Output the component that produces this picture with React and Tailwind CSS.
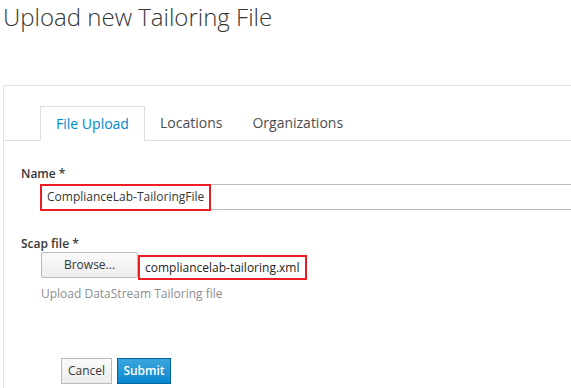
import React from "react";

export default function App() {
  return (
    <div
      className="w-[571px] h-[388px] overflow-hidden bg-white text-[#363636]"
      style={{ fontFamily: '"Open Sans", "Liberation Sans", sans-serif' }}
    >
      <h1 className="pl-[3px] pt-[2px] text-[24px] font-light leading-[30px] text-[#363636]">
        Upload new Tailoring File
      </h1>

      <div className="mt-[53px] ml-[3px] border-t border-l border-[#e2e2e2] h-[400px]">
        {/* tabs */}
        <div className="flex items-end pt-[19px] pl-[36px] border-b border-[#ddd]">
          <div className="-mb-px h-[35px] w-[105px] flex items-center justify-center border border-b-white border-[#ddd] text-[14px] text-[#0088ce]">
            File Upload
          </div>
          <div className="h-[35px] px-[15px] flex items-center text-[14px] text-[#4d4d4d]">
            Locations
          </div>
          <div className="h-[35px] px-[15px] flex items-center text-[14px] text-[#4d4d4d]">
            Organizations
          </div>
        </div>

        {/* name */}
        <div className="pt-[24px] pl-[17px] text-[12px] font-semibold text-[#363636] leading-[18px]">
          Name *
        </div>
        <div className="ml-[37px] mt-[1px] h-[26px] border-t border-b border-[#bbb] flex items-center">
          <span className="-ml-px h-[27px] px-[5px] border-2 border-[#ed1c24] flex items-center text-[12px] text-[#363636]">
            ComplianceLab-TailoringFile
          </span>
        </div>

        {/* scap file */}
        <div className="pt-[25px] pl-[17px] text-[12px] font-semibold text-[#363636] leading-[18px]">
          Scap file *
        </div>
        <div className="ml-[37px] mt-[-1px] flex items-start">
          <button className="h-[26px] w-[97px] rounded-[2px] border border-[#bbb] bg-gradient-to-b from-[#fafafa] to-[#ededed] text-[12px] text-[#363636]">
            Browse...
          </button>
          <span className="mt-[3px] h-[25px] px-[5px] border-2 border-[#ed1c24] flex items-center text-[12px] text-[#222]">
            compliancelab-tailoring.xml
          </span>
        </div>
        <div className="pl-[37px] mt-[5px] text-[12px] leading-[18px] text-[#8b8d8f]">
          Upload DataStream Tailoring file
        </div>

        {/* actions */}
        <div className="pl-[57px] mt-[55px] flex gap-[5px]">
          <button className="h-[26px] w-[51px] border border-[#bbb] bg-gradient-to-b from-[#fafafa] to-[#ededed] text-[12px] text-[#363636]">
            Cancel
          </button>
          <button className="h-[26px] w-[54px] border border-[#00659c] bg-gradient-to-b from-[#39a5dc] to-[#0088ce] text-[12px] font-semibold text-white">
            Submit
          </button>
        </div>
      </div>
    </div>
  );
}
